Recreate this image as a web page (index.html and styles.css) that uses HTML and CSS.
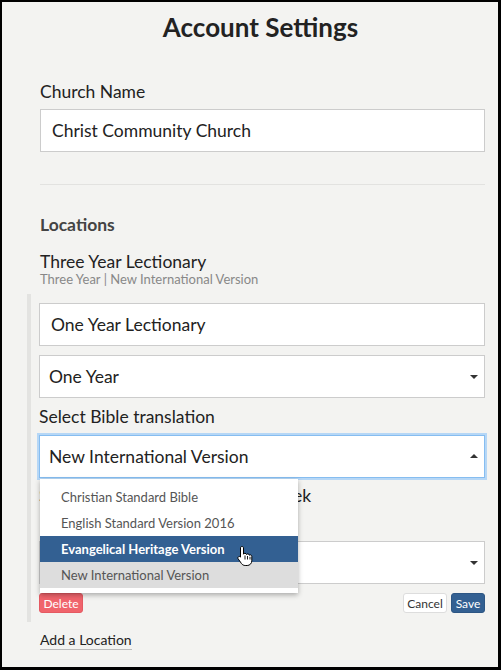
FILE: index.html
```html
<!DOCTYPE html>
<html>
	<head>
		<meta charset="utf-8">
		<title>Account Settings</title>
		<link rel="stylesheet" href="styles.css">
	</head>
	<body>
		<div class="panel">
			<h1 class="title">Account Settings</h1>

			<div class="field">
				<label class="label">Church Name</label>
				<div class="control text">Christ Community Church</div>
			</div>

			<hr class="rule">

			<h2 class="section">Locations</h2>
			<div class="loc">
				<div class="loc-name">Three Year Lectionary</div>
				<div class="loc-meta">Three Year | New International Version</div>
			</div>

			<div class="loc-edit">
				<div class="control text">One Year Lectionary</div>
				<div class="control select">One Year<span class="caret"></span></div>
				<label class="label">Select Bible translation</label>
				<div class="dropdown">
					<div class="control select focus">New International Version<span class="caret up"></span></div>
					<ul class="menu">
						<li>Christian Standard Bible</li>
						<li>English Standard Version 2016</li>
						<li class="hover">Evangelical Heritage Version
							<svg class="hand" width="16" height="22" viewBox="0 0 16 22">
								<path d="M5 1.5c.9 0 1.5.6 1.5 1.5v6.2c.3-.6.9-.9 1.5-.9.8 0 1.4.5 1.5 1.2.3-.4.8-.6 1.3-.6.8 0 1.4.5 1.5 1.3.3-.2.6-.3 1-.3.9 0 1.5.7 1.5 1.6v4.3c0 2.6-2 4.7-4.6 4.7H8.2c-1.5 0-2.8-.7-3.7-1.9L1.2 13.9c-.5-.7-.4-1.6.2-2.1.6-.5 1.5-.4 2 .2l.1.1V3c0-.9.6-1.5 1.5-1.5z" fill="#fff" stroke="#000" stroke-width="1"/>
								<path d="M8 10.5v4M10.5 11v3.5M13 11.8v2.7" stroke="#000" stroke-width="0.9" fill="none"/>
							</svg>
						</li>
						<li class="current">New International Version</li>
					</ul>
				</div>
				<label class="label week">Select the day that begins the week</label>
				<div class="control select"><span class="caret"></span></div>
				<div class="actions">
					<button class="btn danger">Delete</button>
					<span class="grow"></span>
					<button class="btn cancel">Cancel</button>
					<button class="btn primary">Save</button>
				</div>
			</div>

			<a class="add" href="#">Add a Location</a>
		</div>
	</body>
</html>
```

FILE: styles.css
```css
*{margin: 0;padding: 0;box-sizing: border-box;}
body{font-family: Lato, "Open Sans", sans-serif;color: #222;}
ul,li{list-style: none;}

.panel{width: 501px;height: 670px;background: #f3f3f1;
	border: solid #000;border-width: 2px 3px 3px 2px;
	padding: 10px 13px 0 38px;
	}
.title{font-size: 26px;font-weight: 700;text-align: center;color: #222;
	margin-left: -4px;line-height: 30px;
	}

.field{margin-top: 40px;}
.label{display: block;font-size: 17.5px;line-height: 20px;color: #222;margin-bottom: 7px;}

.control{height: 43px;background: #fff;border: 1px solid #ccc;
	font-size: 17.5px;line-height: 41px;color: #222;position: relative;
	}
.control.text{padding-left: 11px;}
.control.select{padding-left: 9px;}
.control.focus{border-color: #86bdf0;box-shadow: 0 0 0 2px #b6d7f6;}

.caret{position: absolute;right: 6px;top: 19px;width: 0;height: 0;
	border-left: 4px solid transparent;border-right: 4px solid transparent;
	border-top: 4px solid #333;
	}
.caret.up{border-top: none;border-bottom: 4px solid #333;top: 18px;}

.rule{border: none;border-top: 1px solid #e2e2e0;margin-top: 32px;}

.section{font-size: 17.5px;font-weight: 700;color: #444;margin-top: 30px;line-height: 20px;}
.loc{margin-top: 17px;}
.loc-name{font-size: 17.5px;line-height: 20px;}
.loc-meta{font-size: 13px;color: #888;line-height: 15px;}

.loc-edit{margin: 7px 0 0 -13px;border-left: 4px solid #e3e3e1;
	padding: 9px 0 9px 8px;
	}
.loc-edit .control{margin-bottom: 9px;}
.loc-edit .label{margin-top: 2px;margin-bottom: 8px;}
.loc-edit .dropdown .control{margin-bottom: 8px;}
.loc-edit .label.week{margin-bottom: 35px;}

.dropdown{position: relative;}
.menu{position: absolute;left: 1px;top: 44px;width: 258px;z-index: 2;
	background: #fff;padding: 5px 0;
	box-shadow: 0 2px 5px rgba(0,0,0,.3);
	}
.menu li{height: 26px;line-height: 26px;font-size: 13px;color: #555;padding-left: 21px;position: relative;}
.menu li.hover{background: #336092;color: #fff;font-weight: 700;}
.menu li.current{background: #ddd;}
.hand{position: absolute;left: 197px;top: 9px;z-index: 3;}

.actions{display: flex;align-items: center;gap: 4px;margin-top: 1px;}
.grow{flex: 1;}
.btn{height: 20px;width: 44px;border: 1px solid #ddd;border-radius: 3px;
	background: #fff;color: #333;font-family: Lato, sans-serif;font-size: 12px;
	}
.btn.danger{background: #f0646c;border-color: #e55a62;color: #fff;}
.btn.primary{width: 34px;background: #336092;border-color: #2d5684;color: #fff;}

.add{display: inline-block;margin-top: 9px;font-size: 14px;color: #222;
	text-decoration: none;border-bottom: 1px solid #bbb;line-height: 18px;
	}
```
